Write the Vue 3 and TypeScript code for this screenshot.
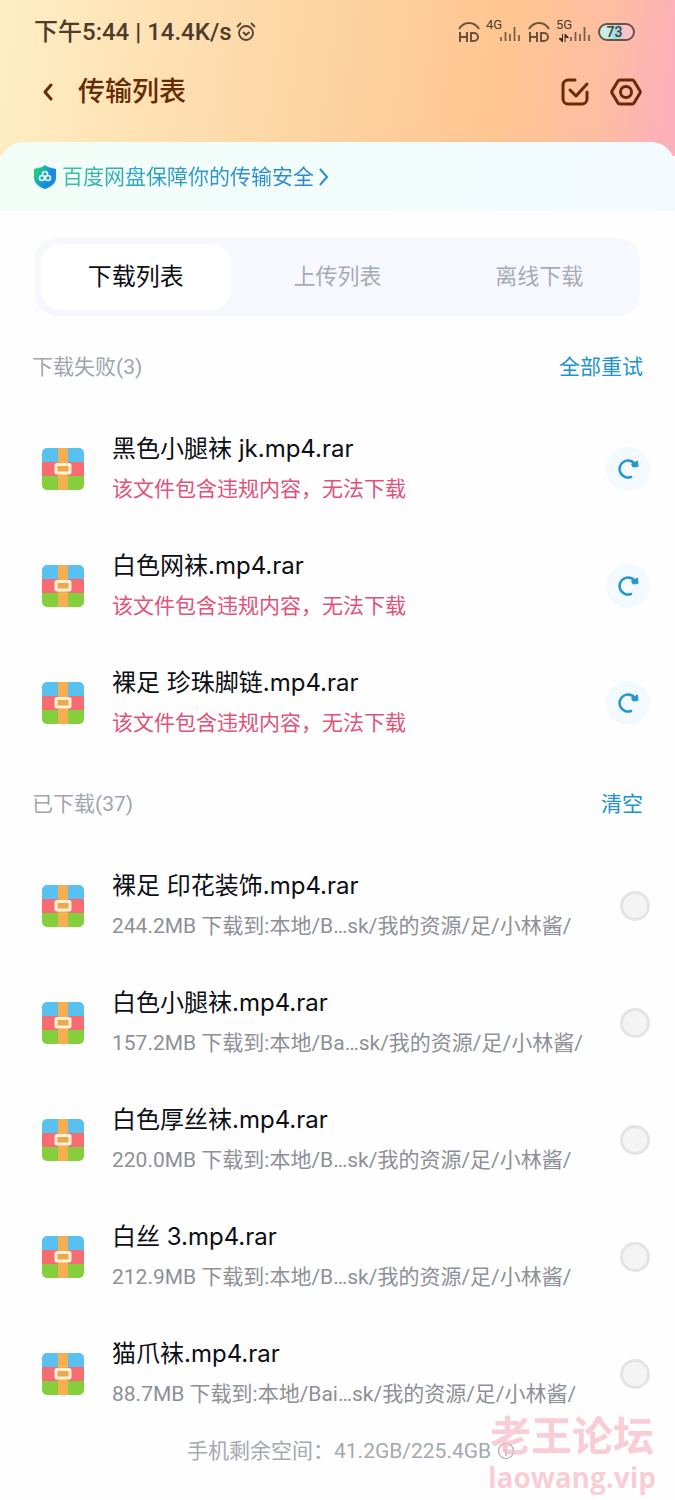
<script setup lang="ts">
import { ref } from 'vue'

interface FailedFile {
  name: string
  reason: string
}

interface DownloadedFile {
  name: string
  detail: string
}

const tabs: string[] = ['下载列表', '上传列表', '离线下载']
const activeTab = ref(0)

const failed: FailedFile[] = [
  { name: '黑色小腿袜 jk.mp4.rar', reason: '该文件包含违规内容，无法下载' },
  { name: '白色网袜.mp4.rar', reason: '该文件包含违规内容，无法下载' },
  { name: '裸足 珍珠脚链.mp4.rar', reason: '该文件包含违规内容，无法下载' },
]

const downloaded: DownloadedFile[] = [
  { name: '裸足 印花装饰.mp4.rar', detail: '244.2MB 下载到:本地/B…sk/我的资源/足/小林酱/' },
  { name: '白色小腿袜.mp4.rar', detail: '157.2MB 下载到:本地/Ba…sk/我的资源/足/小林酱/' },
  { name: '白色厚丝袜.mp4.rar', detail: '220.0MB 下载到:本地/B…sk/我的资源/足/小林酱/' },
  { name: '白丝 3.mp4.rar', detail: '212.9MB 下载到:本地/B…sk/我的资源/足/小林酱/' },
  { name: '猫爪袜.mp4.rar', detail: '88.7MB 下载到:本地/Bai…sk/我的资源/足/小林酱/' },
]

const selected = ref<string[]>([])
</script>

<template>
  <div class="page">
    <svg class="symbols" width="0" height="0" aria-hidden="true">
      <symbol id="archive" viewBox="0 0 42 42">
        <clipPath id="archive-clip"><rect width="42" height="42" rx="5" /></clipPath>
        <g clip-path="url(#archive-clip)">
          <rect width="42" height="14" fill="#59c1f0" />
          <rect y="14" width="42" height="14" fill="#f76c70" />
          <rect y="28" width="42" height="14" fill="#84cf3b" />
          <rect x="16" width="10" height="42" fill="#f5ae50" />
          <rect x="14" y="16.500" width="14" height="8.500" rx="1" fill="#eba94f" stroke="#fff0d8" stroke-width="3" />
        </g>
      </symbol>
      <symbol id="volte" viewBox="0 0 22 22">
        <path d="M1 8C6 0 16 0 21 8" fill="none" stroke="#6b5240" stroke-width="2" />
        <path d="M2 11v10M9 11v10M2 16h7M13 12v8h3a4 4 0 0 0 0-8z" fill="none" stroke="#6b5240" stroke-width="2" />
      </symbol>
      <symbol id="signal" viewBox="0 0 22 16">
        <path d="M2 11v4M6.500 6v9M11 8v7M15.500 1v14M20 9v6" fill="none" stroke="#7c5f48" stroke-width="1.800" />
      </symbol>
    </svg>

    <header class="hero">
      <div class="status">
        <span class="clock">下午5:44 | 14.4K/s</span>
        <svg class="alarm" viewBox="0 0 20 20" fill="none" stroke="#54412f" stroke-width="1.800">
          <circle cx="10" cy="11" r="7" />
          <path d="M1 5l4-4M19 5l-4-4M7 10l3 3 3.500-3" />
        </svg>
        <div class="indicators">
          <svg class="hd"><use href="#volte" /></svg>
          <span class="network">
            <small>4G</small>
            <svg class="bars"><use href="#signal" /></svg>
          </span>
          <svg class="hd"><use href="#volte" /></svg>
          <span class="network">
            <small>5G</small>
            <svg class="traffic" viewBox="0 0 10 8"><path d="M3.500 0v8L0 4.500h3.500M6 8V0l3.500 3.500H6" fill="#3d2c20" stroke="#3d2c20" /></svg>
            <svg class="bars"><use href="#signal" /></svg>
          </span>
          <span class="battery">73</span>
        </div>
      </div>
      <div class="titlebar">
        <button class="icon-button back" type="button" aria-label="返回">
          <svg width="12" height="20" viewBox="0 0 12 20"><path d="M9 3L3 10l6 7" /></svg>
        </button>
        <h1>传输列表</h1>
        <button class="icon-button" type="button" aria-label="选择">
          <svg width="30" height="30" viewBox="0 0 30 30">
            <path d="M15 3H8a5 5 0 0 0-5 5v14a5 5 0 0 0 5 5h14a5 5 0 0 0 5-5v-7M10 13l6 6L27 7" />
          </svg>
        </button>
        <button class="icon-button" type="button" aria-label="设置">
          <svg width="32" height="30" viewBox="0 0 32 30">
            <path d="M10 3h12a2 2 0 0 1 2 1l6 10a2 2 0 0 1 0 2l-6 10a2 2 0 0 1-2 1H10a2 2 0 0 1-2-1L2 16a2 2 0 0 1 0-2L8 4a2 2 0 0 1 2-1z" />
            <circle cx="16" cy="15" r="5.500" />
          </svg>
        </button>
      </div>
    </header>

    <main class="sheet">
      <a class="banner" href="#security">
        <svg width="22" height="24" viewBox="0 0 22 24">
          <defs>
            <linearGradient id="shield" x1="0" y1="0.200" x2="1" y2="0.800">
              <stop offset="0.150" stop-color="#22c68b" />
              <stop offset="0.650" stop-color="#168be8" />
            </linearGradient>
          </defs>
          <path d="M11 0l3 2 8 2v9c0 5-5 9-11 11C5 22 0 18 0 13V4l8-2z" fill="url(#shield)" />
          <g fill="none" stroke="#e8fbff" stroke-width="1.600">
            <circle cx="11" cy="9" r="2.500" />
            <circle cx="8" cy="13" r="2.500" />
            <circle cx="14" cy="13" r="2.500" />
          </g>
        </svg>
        <span>百度网盘保障你的传输安全</span>
        <svg width="12" height="20" viewBox="0 0 12 20" fill="none" stroke="#2b8fcb" stroke-width="2"><path d="M2 2l7 8-7 8" /></svg>
      </a>

      <nav class="tabs">
        <button
          v-for="(tab, index) in tabs"
          :key="tab"
          type="button"
          :class="{ active: index === activeTab }"
          @click="activeTab = index"
        >{{ tab }}</button>
      </nav>

      <section>
        <div class="section-head">
          <h2>下载失败(3)</h2>
          <button type="button">全部重试</button>
        </div>
        <ul>
          <li v-for="file in failed" :key="file.name">
            <svg class="archive"><use href="#archive" /></svg>
            <div class="text">
              <p class="name">{{ file.name }}</p>
              <p class="error">{{ file.reason }}</p>
            </div>
            <button class="retry" type="button" :aria-label="'重试 ' + file.name">
              <svg width="24" height="24" viewBox="0 0 24 24">
                <path d="M15 20A8.500 8.500 0 1 1 18.500 6.500" fill="none" stroke="#2796cf" stroke-width="2.600" stroke-linecap="round" />
                <path d="M21.500 4l.500 5.500-5 .500-1.500-3z" fill="#2796cf" stroke="#2796cf" stroke-linejoin="round" />
              </svg>
            </button>
          </li>
        </ul>
      </section>

      <section>
        <div class="section-head">
          <h2>已下载(37)</h2>
          <button type="button">清空</button>
        </div>
        <ul>
          <li v-for="(file, index) in downloaded" :key="file.name">
            <svg class="archive"><use href="#archive" /></svg>
            <label class="text" :for="'file-' + index">
              <span class="name">{{ file.name }}</span>
              <span class="detail">{{ file.detail }}</span>
            </label>
            <input :id="'file-' + index" v-model="selected" type="checkbox" :value="file.name" />
          </li>
        </ul>
      </section>
    </main>

    <footer>
      <span>手机剩余空间：41.2GB/225.4GB</span>
      <svg width="18" height="18" viewBox="0 0 18 18" fill="none" stroke="#a5a9b1" stroke-width="1.200">
        <circle cx="9" cy="9" r="7.500" />
        <path d="M9 7.500V14M9 4v1.500M6.500 7.500H9" />
      </svg>
    </footer>
    <div class="watermark"><strong>老王论坛</strong><b>laowang.vip</b></div>
  </div>
</template>

<style>
body {
  margin: 0;
  background: #fefefe;
}
</style>

<style scoped>
.page {
  position: relative;
  box-sizing: border-box;
  min-height: 100vh;
  padding-bottom: 28px;
  color: #0c0e14;
  font-family: Roboto, "Noto Sans CJK SC", sans-serif;
  font-size: 21px;
  line-height: 28px;
}
.symbols {
  position: absolute;
}
svg {
  display: block;
  flex: none;
}
button {
  padding: 0;
  border: 0;
  background: none;
  font: inherit;
  cursor: pointer;
}
h1, h2, p, ul {
  margin: 0;
  padding: 0;
  font-weight: 400;
}
.hero {
  height: 156px;
  background: linear-gradient(98deg, #ffefc5 0%, #fee2b4 22%, #fdd3a2 48%, #ffc591 74%, #fdbda4 89%, #fcb0b9 98%);
}
.status {
  display: flex;
  align-items: center;
  height: 64px;
  padding: 0 40px 0 34px;
  color: #4d3b2b;
}
.clock {
  font-size: 24px;
  font-weight: 500;
  white-space: nowrap;
}
.alarm {
  width: 20px;
  height: 20px;
  margin-left: 4px;
}
.indicators {
  display: flex;
  align-items: center;
  gap: 7px;
  margin-left: auto;
}
.hd {
  width: 22px;
  height: 22px;
}
.network {
  position: relative;
  display: flex;
  align-items: flex-end;
  justify-content: flex-end;
  width: 34px;
  height: 20px;
}
.network small {
  position: absolute;
  top: -4px;
  left: -1px;
  font-size: 13px;
  line-height: 13px;
}
.bars {
  width: 22px;
  height: 16px;
}
.traffic {
  width: 10px;
  height: 8px;
}
.battery {
  box-sizing: border-box;
  width: 37px;
  height: 18px;
  padding-right: 4px;
  border: 2px solid #6b5247;
  border-radius: 9px;
  background: linear-gradient(90deg, #c9eee6 20%, #91dcee 50%, #fbc2ca 75%);
  font-size: 14px;
  font-weight: 500;
  line-height: 14px;
  text-align: center;
}
.titlebar {
  display: flex;
  align-items: center;
  height: 56px;
  padding: 0 33px 0 42px;
  color: #672b05;
}
.titlebar h1 {
  flex: 1;
  margin-left: 24px;
  font-size: 27px;
  font-weight: 500;
}
.icon-button {
  margin-left: 20px;
  color: #672b05;
}
.icon-button.back {
  margin-left: 0;
}
.icon-button path,
.icon-button circle {
  fill: none;
  stroke: currentColor;
  stroke-width: 3;
  stroke-linecap: round;
  stroke-linejoin: round;
}
.sheet {
  margin-top: -14px;
}
.banner {
  display: flex;
  align-items: center;
  height: 69px;
  padding: 0 34px;
  border-radius: 24px 24px 0 0;
  background: linear-gradient(100deg, #f2fdf7, #f2fcfc 55%, #f2fafe);
  text-decoration: none;
}
.banner span {
  margin: 0 4px 0 6px;
  background: linear-gradient(90deg, #3ac1a0, #2f9fc6 35%, #2b86d0);
  background-clip: text;
  color: transparent;
}
.tabs {
  display: flex;
  margin: 27px 35px 8px;
  border-radius: 22px;
  background: #f7f8fd;
}
.tabs button {
  flex: 1;
  height: 66px;
  margin: 6px;
  border-radius: 20px;
  color: #a6abb9;
  font-size: 22px;
}
.tabs .active {
  background: #fff;
  color: #0c0e14;
  font-size: 24px;
}
.section-head {
  display: flex;
  align-items: center;
  justify-content: space-between;
  height: 86px;
  padding: 0 32px;
  color: #a1a5af;
}
.section-head h2 {
  font-size: 21px;
}
.section-head button {
  color: #2492cd;
}
ul {
  list-style: none;
}
li {
  display: flex;
  align-items: center;
  height: 117px;
  padding: 0 25px 0 42px;
}
.archive {
  width: 42px;
  height: 42px;
}
.text {
  flex: 1;
  min-width: 0;
  margin-left: 28px;
  line-height: 40px;
  white-space: nowrap;
}
.text span {
  display: block;
}
.text .name {
  font-family: Inter, "Noto Sans CJK SC", sans-serif;
  font-size: 24px;
}
.error {
  color: #e0527a;
}
.detail {
  color: #8d9097;
}
.retry {
  display: grid;
  place-items: center;
  width: 44px;
  height: 44px;
  border-radius: 50%;
  background: #f3faff;
}
input {
  appearance: none;
  box-sizing: border-box;
  width: 30px;
  height: 30px;
  margin: 0;
  border: 3px solid #e4e4e4;
  border-radius: 50%;
  background: #f4f4f4;
}
input:checked {
  border-color: #2492cd;
}
footer {
  display: flex;
  align-items: center;
  gap: 6px;
  height: 38px;
  padding: 0 160px 0 187px;
  color: #a5a9b1;
  white-space: nowrap;
}
.watermark {
  position: absolute;
  right: 19px;
  bottom: 2px;
  color: #f8b4c2;
  opacity: 0.65;
  text-align: center;
  pointer-events: none;
}
.watermark strong,
.watermark b {
  display: block;
  font-family: "Open Sans", "Noto Sans CJK SC", sans-serif;
  font-size: 41px;
  font-weight: 700;
  line-height: 42px;
}
.watermark b {
  font-size: 28px;
}
</style>
